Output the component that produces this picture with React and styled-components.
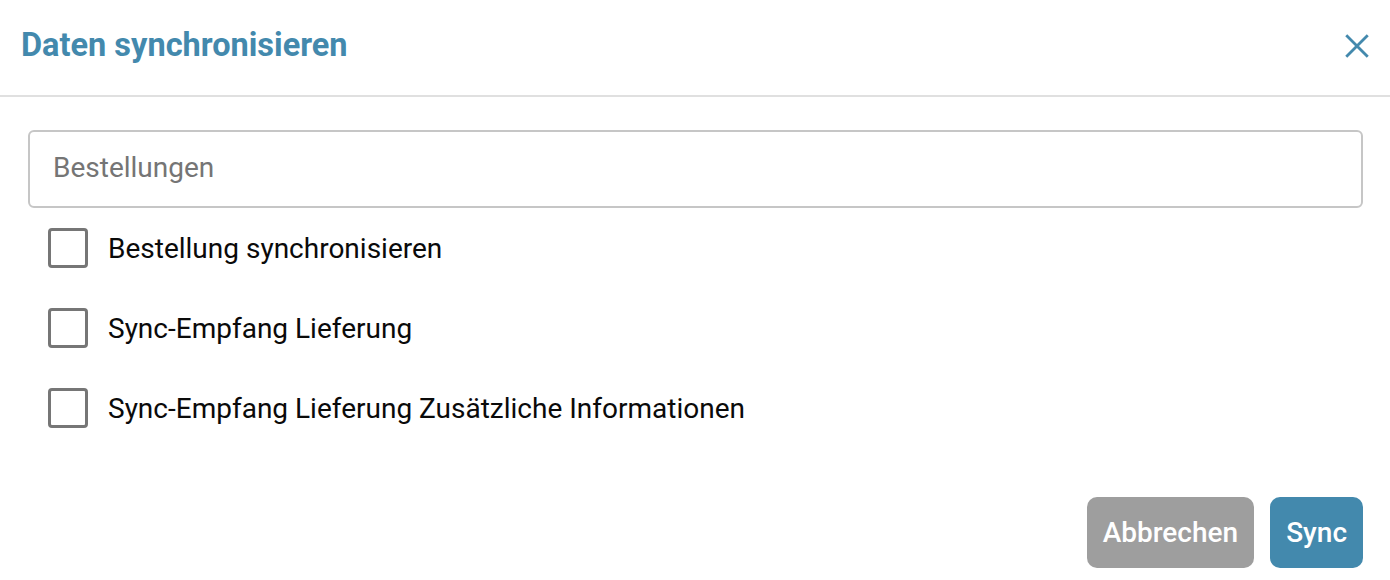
import React, { useState } from "react";
import styled, { createGlobalStyle } from "styled-components";

const GlobalStyle = createGlobalStyle`
    html, body {
        margin: 0;
        padding: 0;
        background: #ffffff;
        font-family: Roboto, "Noto Sans", sans-serif;
    }
`;

const options = [
    "Bestellung synchronisieren",
    "Sync-Empfang Lieferung",
    "Sync-Empfang Lieferung Zusätzliche Informationen",
];

const App = () => {
    const [checked, setChecked] = useState({});

    const toggle = (label) => {
        setChecked((prev) => ({ ...prev, [label]: !prev[label] }));
    };

    return (
        <>
            <GlobalStyle />
            <Dialog>
                <Header>
                    <Title>Daten synchronisieren</Title>
                    <CloseButton aria-label="Schließen">
                        <svg width="26" height="26" viewBox="0 0 24 24">
                            <path
                                d="M3 3 L21 21 M21 3 L3 21"
                                stroke="currentColor"
                                strokeWidth="2.6"
                                strokeLinecap="square"
                                fill="none"
                            />
                        </svg>
                    </CloseButton>
                </Header>
                <Body>
                    <Input placeholder="Bestellungen" />
                    <OptionList>
                        {options.map((label) => (
                            <Option key={label}>
                                <Checkbox
                                    type="checkbox"
                                    checked={!!checked[label]}
                                    onChange={() => toggle(label)}
                                />
                                <OptionLabel>{label}</OptionLabel>
                            </Option>
                        ))}
                    </OptionList>
                </Body>
                <Footer>
                    <Button $variant="cancel">Abbrechen</Button>
                    <Button $variant="primary">Sync</Button>
                </Footer>
            </Dialog>
        </>
    );
};

const Dialog = styled.div`
    display: flex;
    flex-direction: column;
    width: 1390px;
    height: 580px;
    background: #ffffff;
`;

const Header = styled.div`
    display: flex;
    align-items: center;
    justify-content: space-between;
    height: 97px;
    padding: 0 21px;
    border-bottom: 2px solid #e0e0e0;
    box-sizing: border-box;
`;

const Title = styled.h2`
    margin: 0;
    margin-top: -5px;
    font-size: 32.5px;
    font-weight: 700;
    color: #4389ad;
`;

const CloseButton = styled.button`
    display: flex;
    align-items: center;
    justify-content: center;
    margin-top: -4px;
    margin-right: -1px;
    padding: 0;
    border: none;
    background: none;
    color: #4389ad;
    cursor: pointer;
`;

const Body = styled.div`
    display: flex;
    flex-direction: column;
    padding: 33px 27px 0 28px;
`;

const Input = styled.input`
    height: 78px;
    box-sizing: border-box;
    padding: 0 23px 4px;
    border: 2px solid #c6c6c6;
    border-radius: 6px;
    font-family: Roboto, sans-serif;
    font-size: 28px;
    color: #333;
    outline: none;

    &::placeholder {
        color: #757575;
    }
`;

const OptionList = styled.div`
    display: flex;
    flex-direction: column;
    padding-left: 20px;
`;

const Option = styled.label`
    display: flex;
    align-items: center;
    gap: 20px;
    height: 80px;
    cursor: pointer;
`;

const Checkbox = styled.input`
    appearance: none;
    width: 40px;
    height: 40px;
    margin: 0;
    box-sizing: border-box;
    border: 3px solid #767676;
    border-radius: 4px;
    background: #fff;
    cursor: pointer;

    &:checked {
        background: #4389ad;
        border-color: #4389ad;
    }
`;

const OptionLabel = styled.span`
    font-size: 28px;
    color: #0a0a0a;
`;

const Footer = styled.div`
    display: flex;
    justify-content: flex-end;
    gap: 16px;
    margin-top: auto;
    padding: 0 27px 12px 0;
`;

const Button = styled.button`
    height: 71px;
    padding: 0 16px;
    border: none;
    border-radius: 10px;
    font-family: Roboto, sans-serif;
    font-size: 28px;
    font-weight: 500;
    color: #ffffff;
    background: ${({ $variant }) => ($variant === "primary" ? "#4389ad" : "#9e9e9e")};
    cursor: pointer;
`;

export default App;
